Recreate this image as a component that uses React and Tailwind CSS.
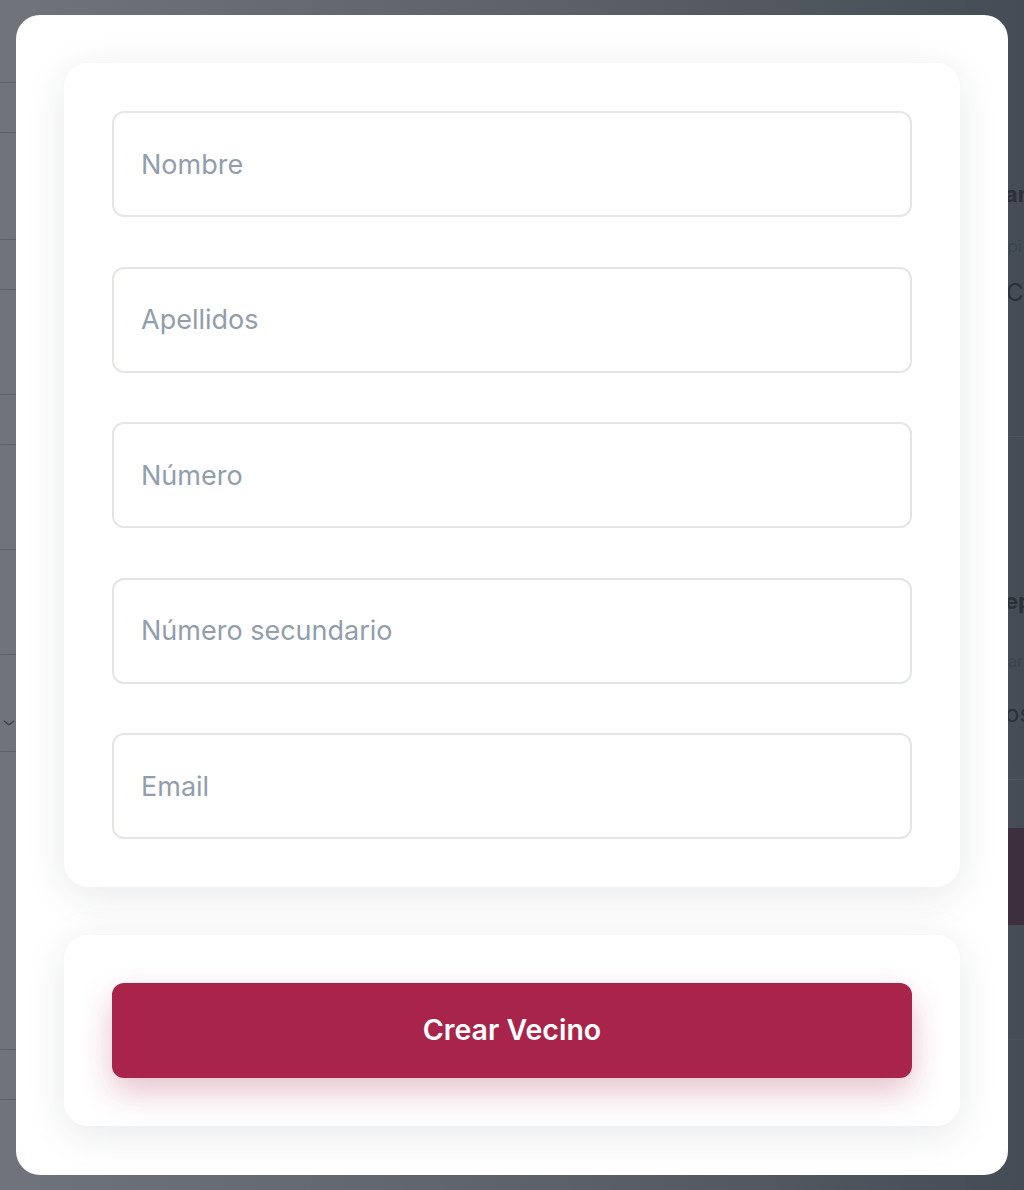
import React from "react";

const fields = ["Nombre", "Apellidos", "Número", "Número secundario", "Email"];

// rows of the page that sits behind the dimmed overlay
const leftRows = [83, 50, 107, 50, 105, 50, 105, 105, 97, 298, 50];

function BackgroundPage() {
  return (
    <div className="flex h-[1190px] w-full bg-gradient-to-r from-[#6f747c] via-[#5e636b] to-[#464c55]">
      <div className="w-[16px] flex flex-col">
        {leftRows.map((h, i) => (
          <div
            key={i}
            style={{ height: h }}
            className="border-b border-[#5c6169] flex items-center"
          >
            {i === 8 && (
              <svg width="14" height="14" viewBox="0 0 24 24" className="ml-[2px] mt-[40px]">
                <path d="M4 9l8 6 8-6" fill="none" stroke="#3d424a" strokeWidth="2.5" strokeLinecap="round" />
              </svg>
            )}
          </div>
        ))}
      </div>
      <div className="flex-1" />
      <div className="w-[16px] overflow-hidden flex flex-col text-[#2c3038] whitespace-nowrap">
        <div className="h-[437px] border-b border-[#50565f] pt-[180px]">
          <div className="text-[22px] font-bold leading-[28px] -ml-[3px]">ar</div>
          <div className="text-[16px] mt-[28px] text-[#3e434b] leading-[20px]">pi</div>
          <div className="text-[24px] mt-[22px] leading-[30px] -ml-[2px]">Ca</div>
        </div>
        <div className="h-[343px] border-b border-[#50565f] pt-[150px]">
          <div className="text-[22px] font-bold leading-[28px] -ml-[3px]">ep</div>
          <div className="text-[16px] mt-[36px] text-[#3e434b] leading-[20px]">ar</div>
          <div className="text-[24px] mt-[28px] leading-[30px] -ml-[3px]">os</div>
        </div>
        <div className="h-[48px]" />
        <div className="h-[97px] bg-[#3e2f3e]" />
        <div className="h-[115px] border-b border-[#4e545d]" />
      </div>
    </div>
  );
}

export default function App() {
  return (
    <div
      className="relative w-[1024px] h-[1190px] overflow-hidden"
      style={{ fontFamily: "Inter, 'Noto Sans', sans-serif" }}
    >
      <BackgroundPage />

      {/* Modal */}
      <div className="absolute left-[16px] top-[15px] w-[992px] h-[1160px] rounded-[24px] bg-white px-[48px] pt-[48px] flex flex-col gap-[48px]">
        <div className="bg-white rounded-[24px] p-[48px] flex flex-col gap-[49.5px] shadow-[0_8px_40px_rgba(30,41,59,0.1)]">
          {fields.map((f) => (
            <input
              key={f}
              type="text"
              placeholder={f}
              className="h-[106px] w-full rounded-[12px] border-2 border-[#e3e5e9] bg-white px-[27px] text-[27px] text-[#1f2937] placeholder:text-[#929eab] outline-none"
            />
          ))}
        </div>

        <div className="bg-white rounded-[24px] p-[48px] shadow-[0_8px_40px_rgba(30,41,59,0.1)]">
          <button className="h-[95px] w-full rounded-[12px] bg-[#a8244a] text-white text-[28.5px] font-semibold shadow-[0_14px_32px_rgba(168,36,74,0.28)]">
            Crear Vecino
          </button>
        </div>
      </div>
    </div>
  );
}
